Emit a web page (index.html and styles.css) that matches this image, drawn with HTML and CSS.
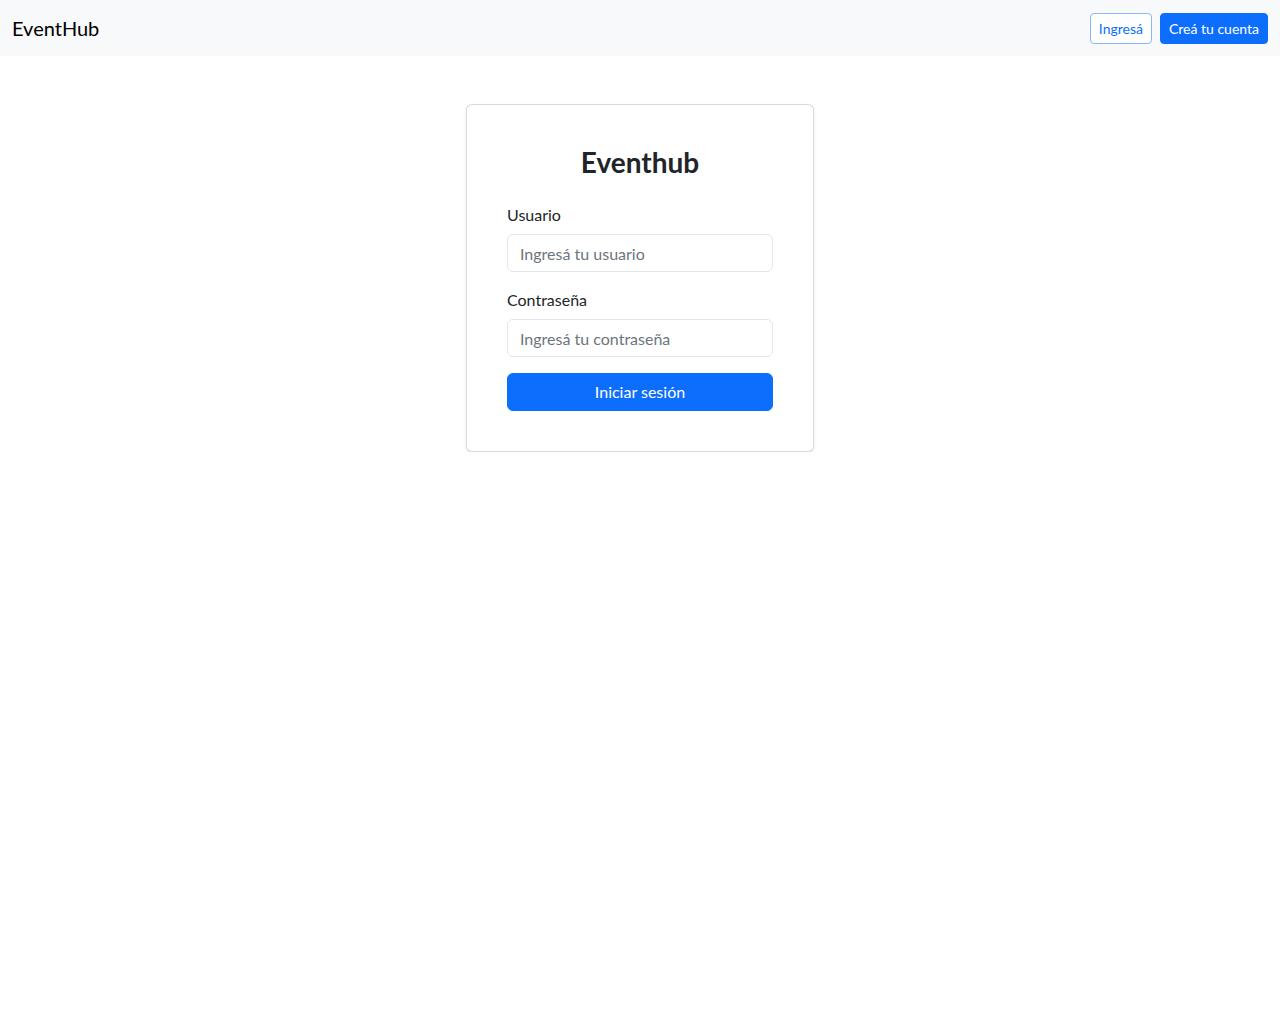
FILE: index.html
```html
<!DOCTYPE html>
<html lang="es">
<head>
<meta charset="utf-8">
<title>EventHub</title>
<link rel="stylesheet" href="styles.css">
</head>
<body>
<nav class="navbar">
  <a class="brand" href="#">EventHub</a>
  <div class="nav-actions">
    <a class="btn btn-sm btn-outline" href="#">Ingresá</a>
    <a class="btn btn-sm btn-primary" href="#">Creá tu cuenta</a>
  </div>
</nav>
<main class="main">
  <div class="card">
    <h3 class="title">Eventhub</h3>
    <form class="form">
      <div class="field">
        <label class="label" for="user">Usuario</label>
        <input class="input" id="user" type="text" placeholder="Ingresá tu usuario">
      </div>
      <div class="field">
        <label class="label" for="pass">Contraseña</label>
        <input class="input" id="pass" type="password" placeholder="Ingresá tu contraseña">
      </div>
      <button class="btn btn-primary btn-block" type="button">Iniciar sesión</button>
    </form>
  </div>
</main>
</body>
</html>
```
FILE: styles.css
```css
* { box-sizing: border-box; }
body {
  margin: 0;
  font-family: Lato, "Noto Sans", sans-serif;
  font-size: 16px;
  line-height: 1.5;
  color: #212529;
  background: #fff;
}
.navbar {
  background: #f8f9fa;
  height: 56px;
  padding: 0 12px;
  display: flex;
  align-items: center;
  justify-content: space-between;
}
.brand {
  font-size: 20px;
  line-height: 30px;
  color: #000;
  text-decoration: none;
}
.nav-actions {
  display: flex;
  gap: 8px;
}
.btn {
  display: inline-block;
  font-family: inherit;
  text-decoration: none;
  text-align: center;
  border: 1px solid transparent;
  border-radius: 6px;
  font-size: 16px;
  line-height: 24px;
  padding: 6px 12px;
  cursor: pointer;
}
.btn-sm {
  font-size: 14px;
  line-height: 21px;
  padding: 4px 8px;
  border-radius: 4px;
}
.btn-outline {
  color: #0d6efd;
  border-color: #8bb6fa;
  background: #fff;
}
.btn-primary {
  color: #fff;
  background: #0d6efd;
  border-color: #0d6efd;
}
.main {
  display: flex;
  justify-content: center;
  padding-top: 48px;
}
.card {
  width: 348px;
  border: 1px solid rgba(0,0,0,.15);
  border-radius: 6px;
  box-shadow: 0 2px 4px rgba(0,0,0,.075);
  padding: 40px;
  background: #fff;
}
.title {
  margin: 0 0 24px;
  text-align: center;
  font-size: 28px;
  line-height: 34px;
  font-weight: 700;
  color: #212529;
}
.form {
  display: flex;
  flex-direction: column;
}
.field {
  display: flex;
  flex-direction: column;
  margin-bottom: 16px;
}
.label {
  margin-bottom: 7px;
  line-height: 24px;
}
.input {
  font-family: inherit;
  font-size: 16px;
  line-height: 24px;
  height: 38px;
  padding: 6px 12px;
  border: 1px solid #e3e6ea;
  border-radius: 6px;
  color: #212529;
  background: #fff;
  width: 100%;
}
.input::placeholder { color: #6c757d; opacity: 1; }
.btn-block {
  width: 100%;
  display: block;
  height: 38px;
}
```
